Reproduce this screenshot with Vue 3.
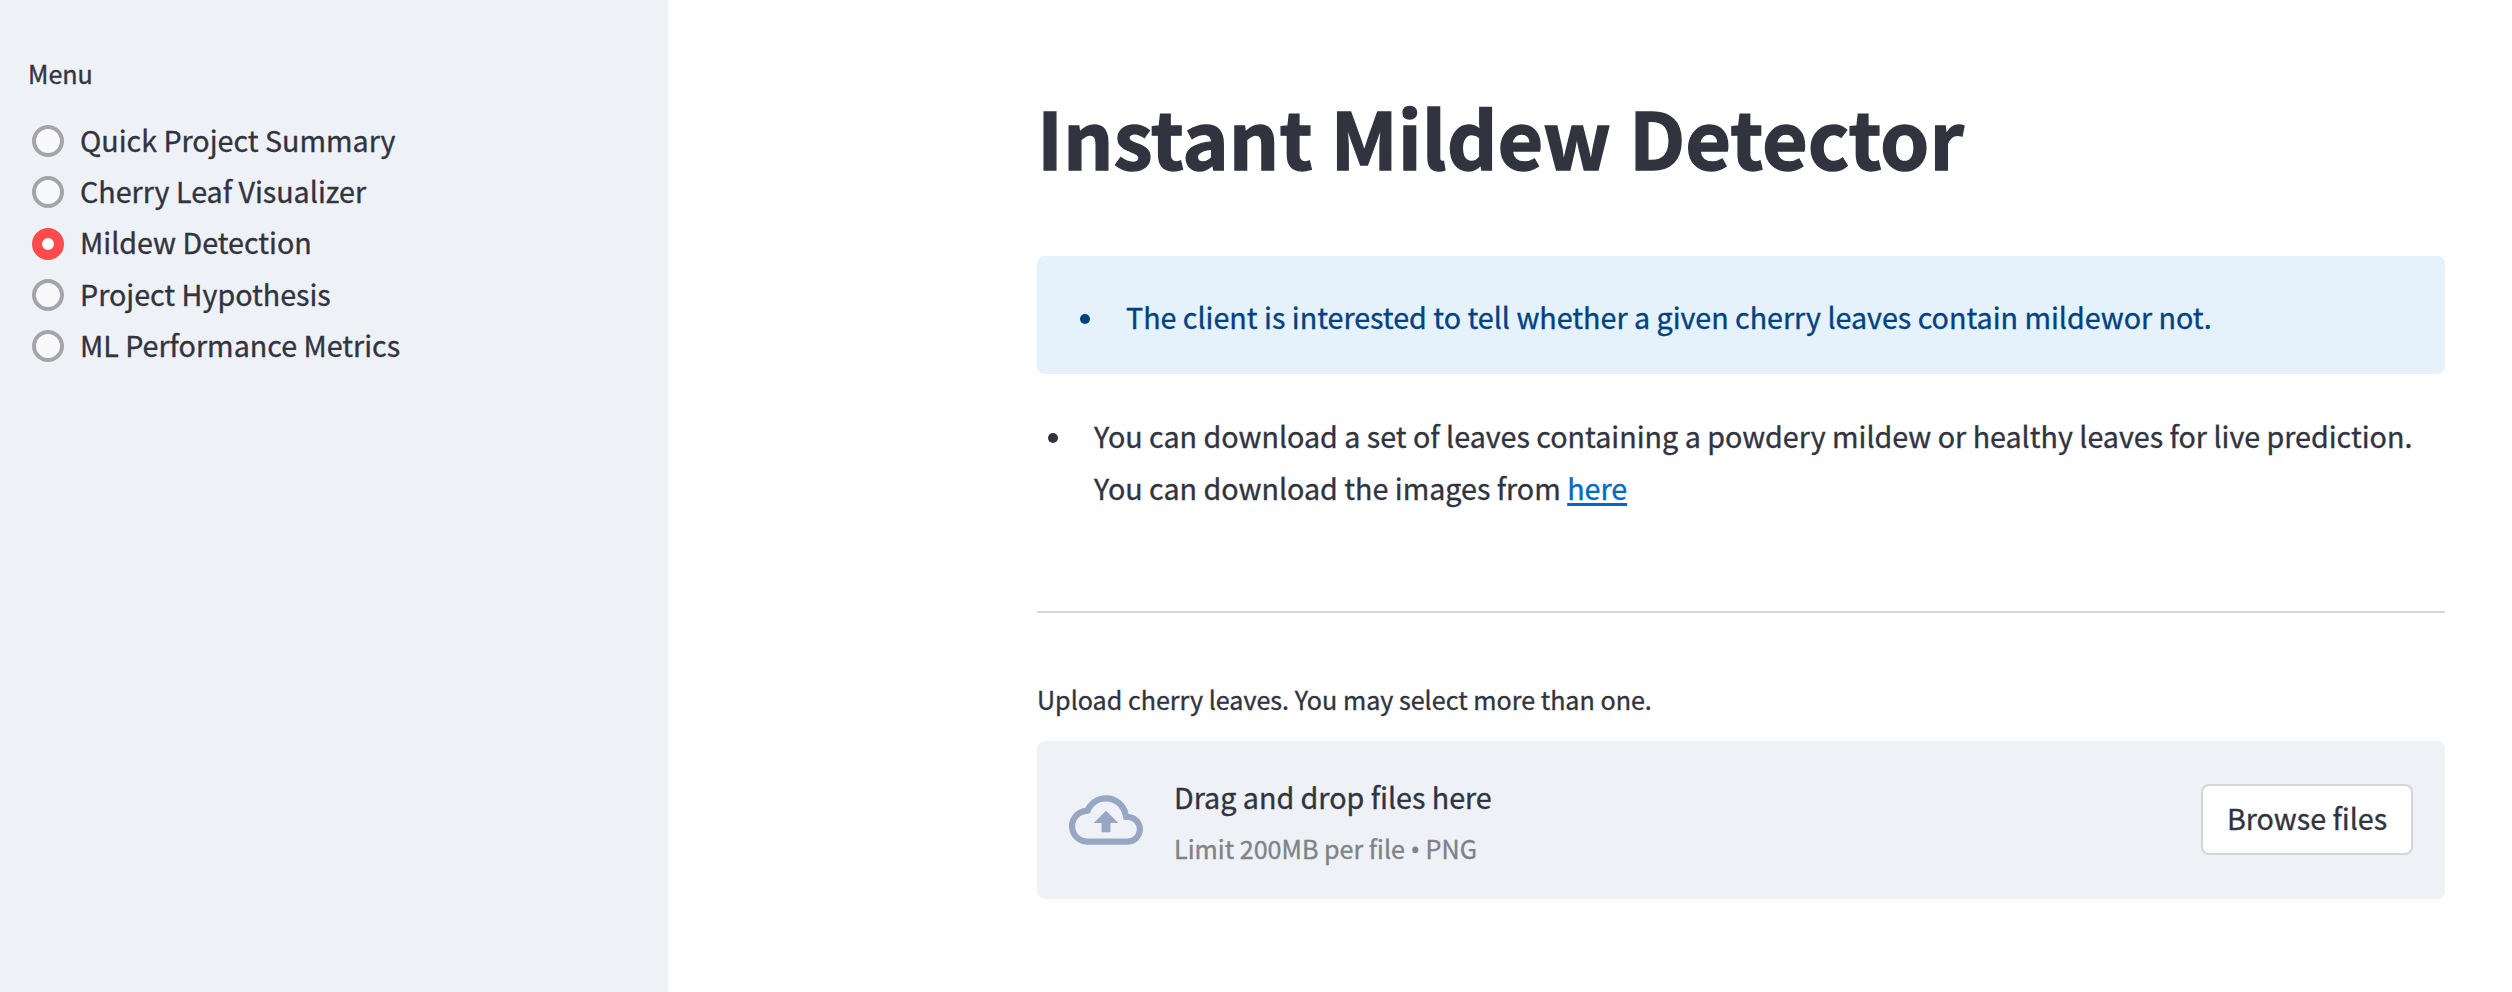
<script setup>
import { ref } from 'vue'

const pages = [
  'Quick Project Summary',
  'Cherry Leaf Visualizer',
  'Mildew Detection',
  'Project Hypothesis',
  'ML Performance Metrics',
]
const current = ref('Mildew Detection')
</script>

<template>
  <div class="app">
    <aside class="sidebar">
      <p class="menu-label">Menu</p>
      <ul class="menu">
        <li v-for="page in pages" :key="page" class="menu-item" @click="current = page">
          <span class="radio" :class="{ checked: page === current }"></span>
          <span class="menu-text">{{ page }}</span>
        </li>
      </ul>
    </aside>

    <main class="main">
      <div class="block">
        <h1 class="title">Instant Mildew Detector</h1>

        <div class="alert">
          <span class="bullet"></span>
          <p class="text alert-text">The client is interested to tell whether a given cherry leaves contain mildewor not.</p>
        </div>

        <div class="note">
          <span class="bullet"></span>
          <p class="text note-text">
            You can download a set of leaves containing a powdery mildew or healthy leaves for live prediction.<br />
            You can download the images from <a class="link" href="#">here</a>
          </p>
        </div>

        <hr class="divider" />

        <p class="upload-label">Upload cherry leaves. You may select more than one.</p>
        <section class="dropzone">
          <svg class="cloud" viewBox="0 0 24 24" fill="currentColor">
            <path d="M19.35 10.04A7.49 7.49 0 0012 4C9.11 4 6.6 5.64 5.35 8.04A5.994 5.994 0 000 14c0 3.31 2.69 6 6 6h13c2.76 0 5-2.24 5-5 0-2.64-2.05-4.78-4.65-4.96zM19 18H6c-2.21 0-4-1.79-4-4 0-2.05 1.53-3.76 3.56-3.97l1.07-.11.5-.95A5.469 5.469 0 0112 6c2.62 0 4.88 1.86 5.39 4.43l.3 1.5 1.53.11A2.98 2.98 0 0122 15c0 1.65-1.35 3-3 3zM8 13h2.55v3h2.9v-3H16l-4-4z" />
          </svg>
          <div class="drop-copy">
            <span class="drop-title">Drag and drop files here</span>
            <span class="drop-hint">Limit 200MB per file <span class="dot">•</span> PNG</span>
          </div>
          <button class="browse" type="button">Browse files</button>
        </section>
      </div>
    </main>
  </div>
</template>

<style>
body {
  margin: 0;
  background: #fff;
}
</style>

<style scoped>
.app {
  display: flex;
  height: 992px;
  overflow: hidden;
  font-family: 'Noto Sans CJK SC', 'Noto Sans', sans-serif;
  font-size: 28.67px;
  color: #31333f;
  -webkit-text-stroke-width: 0.35px;
}
p,
h1,
ul {
  margin: 0;
  padding: 0;
}
.sidebar {
  box-sizing: border-box;
  flex: none;
  width: 668px;
  padding: 51px 28px 0;
  background: #eef1f6;
}
.menu-label {
  font-size: 25.1px;
  line-height: 44px;
}
.menu {
  margin-top: 20.4px;
  list-style: none;
}
.menu-item {
  display: flex;
  align-items: center;
  gap: 16px;
  height: 51.25px;
  padding-left: 4px;
  cursor: pointer;
}
.menu-text {
  line-height: 48px;
  padding-bottom: 2.4px;
  white-space: nowrap;
}
.radio {
  box-sizing: border-box;
  width: 32px;
  height: 32px;
  border: 4px solid #a4a5ab;
  border-radius: 50%;
  background: #f9f9fc;
}
.radio.checked {
  border: 10px solid #ff4b4b;
  background: #fff;
}
.main {
  flex: 1;
  padding: 83px 0 0 369px;
}
.block {
  width: 1408px;
}
.title {
  font-size: 78.9px;
  line-height: 106px;
  font-weight: 700;
  white-space: nowrap;
  -webkit-text-stroke-width: 1.4px;
}
.alert {
  box-sizing: border-box;
  display: flex;
  height: 118px;
  margin-top: 67px;
  padding: 35px 32px 0 43px;
  border-radius: 8px;
  background: #e5f1fb;
  color: #004280;
}
.bullet {
  flex: none;
  width: 10px;
  height: 10px;
  margin-top: 23px;
  border-radius: 50%;
  background: currentColor;
}
.text {
  white-space: nowrap;
}
.alert-text {
  margin-left: 36px;
  line-height: 51px;
}
.note {
  display: flex;
  margin-top: 36px;
  padding-left: 11px;
}
.note .bullet {
  margin-top: 23px;
}
.note-text {
  margin-left: 36px;
  line-height: 52px;
}
.link {
  color: #0068c9;
  text-decoration: underline;
  text-decoration-thickness: 3px;
  text-underline-offset: 3px;
}
.divider {
  height: 2px;
  margin: 97px 0 65px;
  border: 0;
  background: #d6d6d9;
}
.upload-label {
  font-size: 25.1px;
  line-height: 42px;
}
.dropzone {
  box-sizing: border-box;
  display: flex;
  align-items: center;
  height: 158px;
  margin-top: 21px;
  padding: 0 32px;
  border-radius: 8px;
  background: #eef1f6;
}
.cloud {
  flex: none;
  width: 74px;
  height: 74px;
  color: #97a6c3;
}
.drop-copy {
  display: flex;
  flex: 1;
  flex-direction: column;
  margin-left: 31px;
  padding-top: 5px;
}
.drop-title {
  line-height: 51px;
}
.drop-hint {
  font-size: 25.1px;
  line-height: 52px;
  color: #808286;
}
.dot {
  font-family: 'Noto Sans', sans-serif;
  line-height: 1;
}
.browse {
  box-sizing: border-box;
  width: 212px;
  height: 71px;
  margin-bottom: 1px;
  padding: 0 0 4px;
  border: 2px solid #d6d6d9;
  border-radius: 8px;
  background: #fff;
  color: inherit;
  font: inherit;
  white-space: nowrap;
}
</style>
